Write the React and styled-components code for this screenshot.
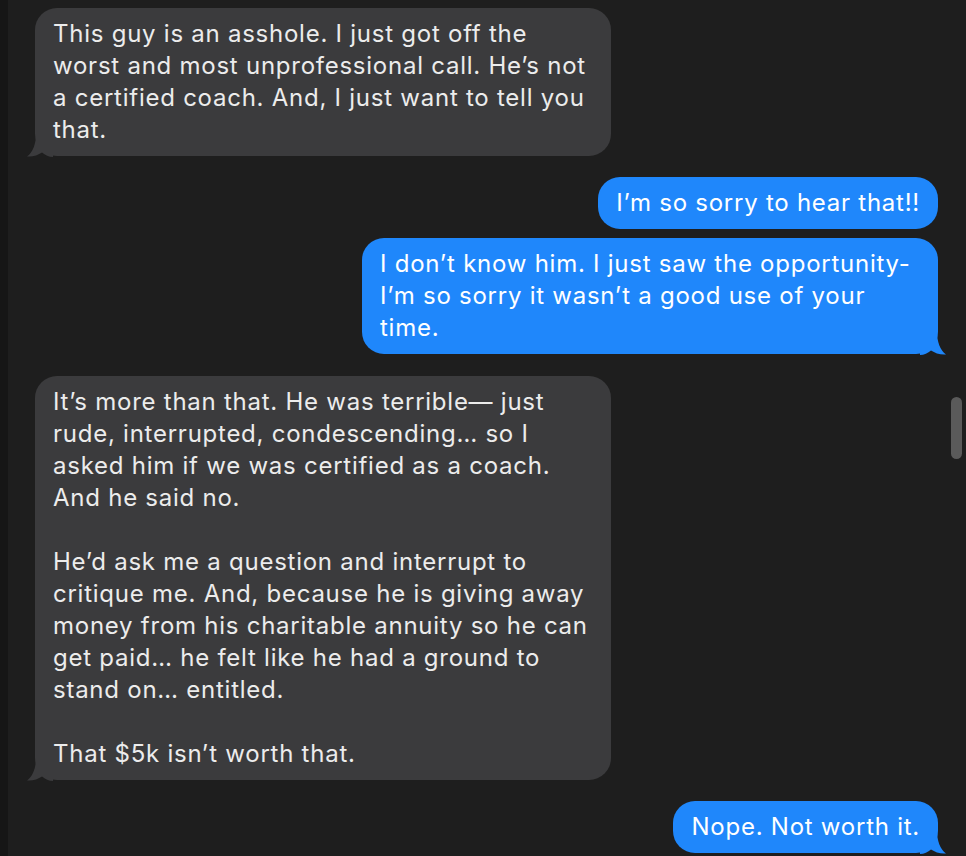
import React from 'react';
import styled, { createGlobalStyle } from 'styled-components';

const messages = [
    {
        id: 1,
        from: 'them',
        gap: 8,
        wide: true,
        lines: ['This guy is an asshole. I just got off the', 'worst and most unprofessional call. He’s not', 'a certified coach. And, I just want to tell you', 'that.']
    },
    { id: 2, from: 'me', gap: 21, tail: false, lines: ['I’m so sorry to hear that!!'] },
    {
        id: 3,
        from: 'me',
        gap: 9,
        wide: true,
        lines: ['I don’t know him. I just saw the opportunity-', 'I’m so sorry it wasn’t a good use of your', 'time.']
    },
    {
        id: 4,
        from: 'them',
        gap: 22,
        wide: true,
        lines: [
            'It’s more than that. He was terrible— just',
            'rude, interrupted, condescending… so I',
            'asked him if we was certified as a coach.',
            'And he said no.',
            '',
            'He’d ask me a question and interrupt to',
            'critique me. And, because he is giving away',
            'money from his charitable annuity so he can',
            'get paid… he felt like he had a ground to',
            'stand on… entitled.',
            '',
            'That $5k isn’t worth that.'
        ]
    },
    { id: 5, from: 'me', gap: 21, lines: ['Nope. Not worth it.'] }
];

const GlobalStyle = createGlobalStyle`
    html, body {
        margin: 0;
        padding: 0;
        background: #1e1e1e;
    }
    * {
        box-sizing: border-box;
    }
`;

function Tail({ mine }) {
    return (
        <TailSvg $mine={mine} width="26" height="24" viewBox="0 0 26 24">
            <path d="M9 0 C9 11 6 19 0 23.5 C6 24 11 22 15 19.5 C18 22 22 24 26 24 L26 0 Z" fill="currentColor" />
        </TailSvg>
    );
}

export default function App() {
    return (
        <>
            <GlobalStyle />
            <Screen>
                <EdgeStrip />
                <Thread>
                    {messages.map((m) => (
                        <Row key={m.id} $mine={m.from === 'me'} $gap={m.gap}>
                            <Bubble $mine={m.from === 'me'} $wide={m.wide}>
                                {m.lines.join('\n')}
                                {m.tail !== false && <Tail mine={m.from === 'me'} />}
                            </Bubble>
                        </Row>
                    ))}
                </Thread>
                <ScrollThumb />
            </Screen>
        </>
    );
}

const Screen = styled.div`
    position: relative;
    display: flex;
    width: 966px;
    height: 856px;
    overflow: hidden;
    background: #1e1e1e;
    font-family: Inter, 'Liberation Sans', sans-serif;
`;

const EdgeStrip = styled.div`
    flex: 0 0 8px;
    background: #161616;
`;

const Thread = styled.div`
    flex: 1;
    display: flex;
    flex-direction: column;
    padding: 0 28px 0 27px;
`;

const Row = styled.div`
    display: flex;
    justify-content: ${(p) => (p.$mine ? 'flex-end' : 'flex-start')};
    margin-top: ${(p) => p.$gap}px;
`;

const Bubble = styled.div`
    position: relative;
    width: ${(p) => (p.$wide ? '576px' : 'auto')};
    padding: 10px 18px;
    border-radius: 22px;
    font-size: 24px;
    letter-spacing: 0.75px;
    line-height: 32px;
    white-space: pre;
    background: ${(p) => (p.$mine ? '#1f87fb' : '#3b3b3d')};
    color: ${(p) => (p.$mine ? '#ffffff' : '#ececec')};
`;

const TailSvg = styled.svg`
    position: absolute;
    bottom: -1px;
    ${(p) => (p.$mine ? 'right: -8px; transform: scaleX(-1);' : 'left: -8px;')}
    color: ${(p) => (p.$mine ? '#1f87fb' : '#3b3b3d')};
`;

const ScrollThumb = styled.div`
    position: absolute;
    top: 397px;
    right: 4px;
    width: 11px;
    height: 62px;
    border-radius: 6px;
    background: #5a5a5a;
`;
